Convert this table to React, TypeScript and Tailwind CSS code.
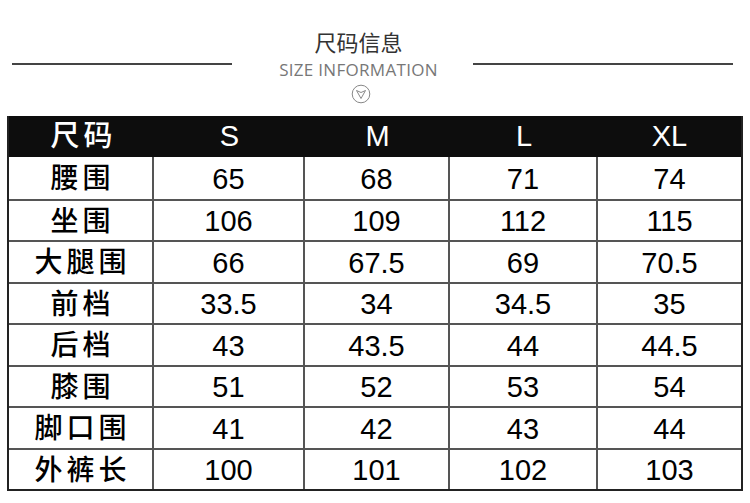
import React from "react";

const cols = ["尺码", "S", "M", "L", "XL"];

const rows: (string | number)[][] = [
  ["腰围", 65, 68, 71, 74],
  ["坐围", 106, 109, 112, 115],
  ["大腿围", 66, 67.5, 69, 70.5],
  ["前档", 33.5, 34, 34.5, 35],
  ["后档", 43, 43.5, 44, 44.5],
  ["膝围", 51, 52, 53, 54],
  ["脚口围", 41, 42, 43, 44],
  ["外裤长", 100, 101, 102, 103],
];

const font = {
  fontFamily: '"Liberation Sans", Arial, "Noto Sans CJK SC", sans-serif',
};

export default function App() {
  return (
    <div className="w-[750px] h-[503px] bg-white overflow-hidden" style={font}>
      {/* Heading */}
      <div className="flex items-start px-[12px] pt-[28px]">
        <div className="w-[220px] h-[2px] bg-[#444] mt-[35px]" />
        <div className="w-[241px] pl-[12px] flex flex-col items-center">
          <h2
            className="text-[22px] leading-[26px] text-[#333] whitespace-nowrap"
            style={{ fontFamily: '"Noto Sans CJK SC", sans-serif' }}
          >
            尺码信息
          </h2>
          <span
            className="text-[17px] leading-[22px] mt-[5px] text-[#777] whitespace-nowrap tracking-[0.3px]"
            style={{ fontFamily: '"Open Sans", sans-serif' }}
          >
            SIZE INFORMATION
          </span>
          <svg width="20" height="20" viewBox="-10 -10 20 20" className="mt-[3px] ml-[4px]">
            <circle cx="0" cy="0" r="8.8" fill="none" stroke="#888" strokeWidth="1" />
            <path
              d="M-4.5 -3.5 L0 -1.5 L4.5 -3.5 L0 4.5 Z"
              fill="none"
              stroke="#888"
              strokeWidth="1"
              strokeLinejoin="round"
            />
          </svg>
        </div>
        <div className="w-[260px] h-[2px] bg-[#444] mt-[35px]" />
      </div>

      {/* Table */}
      <div className="ml-[7px] mt-[12px] w-[736px] border-x-2 border-b-2 border-[#222]">
        <div className="grid grid-cols-[145px_151px_145px_148px_1fr] bg-[#0d0d0d] text-white h-[41px] items-center">
          {cols.map((c) => (
            <div
              key={c}
              className={`text-center text-[29px] leading-none ${c === "尺码" ? "font-medium tracking-[4px] pl-[4px]" : ""}`}
            >
              {c}
            </div>
          ))}
        </div>
        {rows.map((r, i) => (
          <div
            key={i}
            className={`grid grid-cols-[145px_151px_145px_148px_1fr] h-[41.5px] text-black ${
              i > 0 ? "border-t-2 border-[#555]" : ""
            }`}
          >
            {r.map((v, j) => (
              <div
                key={j}
                className={`flex items-center justify-center leading-none pt-[3px] ${
                  j === 0 ? "text-[28px] font-medium tracking-[4px] pl-[4px]" : "text-[29px]"
                } ${j < 4 ? "border-r-2 border-[#555]" : ""}`}
              >
                {v}
              </div>
            ))}
          </div>
        ))}
      </div>
    </div>
  );
}
